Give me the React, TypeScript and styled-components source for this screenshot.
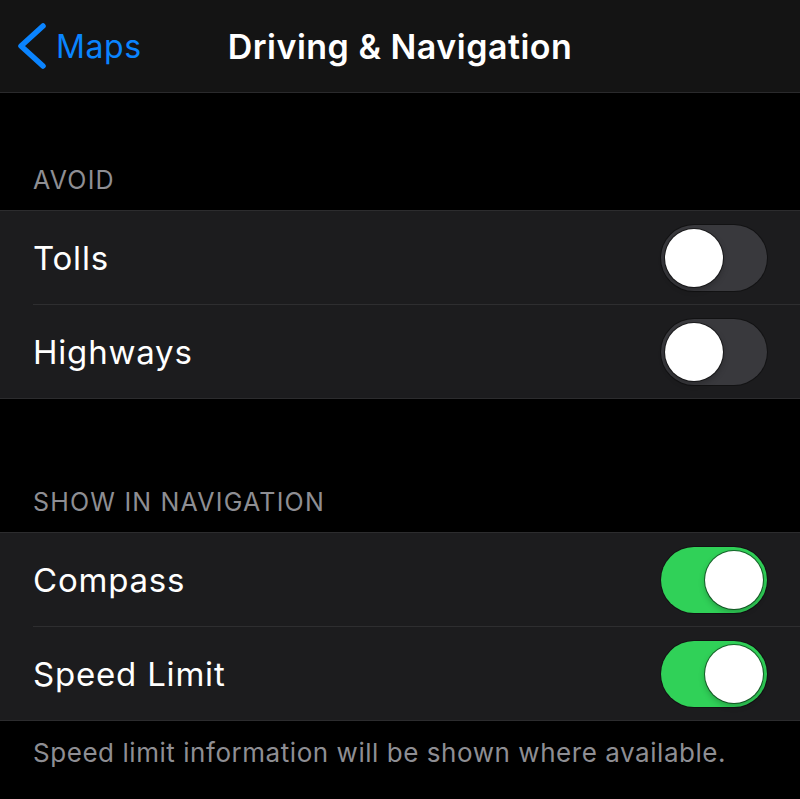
import React from 'react'
import styled, { createGlobalStyle } from 'styled-components'

const GlobalStyle = createGlobalStyle`
  html, body {
    margin: 0;
    padding: 0;
    background: #000000;
  }
  body {
    font-family: Inter, "Liberation Sans", Arial, sans-serif;
    -webkit-font-smoothing: antialiased;
  }
`

const Screen = styled.div`
  width: 800px;
  min-height: 799px;
  background: #000000;
  color: #ffffff;
`

const NavBar = styled.header`
  height: 92px;
  display: grid;
  grid-template-columns: 1fr auto 1fr;
  align-items: center;
  background: #141414;
  border-bottom: 1px solid #2a2a2c;
`

const BackButton = styled.button`
  justify-self: start;
  display: flex;
  align-items: center;
  gap: 9px;
  margin: 0;
  padding: 0 0 0 17px;
  border: none;
  background: transparent;
  color: #0a84ff;
  font-family: inherit;
  font-size: 32px;
  letter-spacing: 0.6px;
  cursor: pointer;
`

const Title = styled.h1`
  margin: 0;
  font-size: 34px;
  font-weight: 600;
  letter-spacing: 0.5px;
  color: #ffffff;
`

const Section = styled.section<{ $top: number }>`
  padding-top: ${({ $top }) => $top}px;
`

const SectionHeader = styled.div`
  padding: 0 33px;
  margin-bottom: 15px;
  font-size: 25px;
  line-height: 30px;
  letter-spacing: 1.2px;
  color: #8e8e93;
  text-transform: uppercase;
`

const Group = styled.div`
  background: #1c1c1e;
  border-top: 1px solid #2c2c2e;
  border-bottom: 1px solid #2c2c2e;
`

const Row = styled.div`
  height: 93px;
  display: flex;
  align-items: center;
  justify-content: space-between;
  margin-left: 33px;
  padding-right: 33px;
  & + & {
    border-top: 1px solid #2e2e30;
  }
`

const Label = styled.span`
  font-size: 33px;
  letter-spacing: 0.8px;
  color: #ffffff;
`

const Track = styled.button<{ $on: boolean }>`
  width: 106px;
  height: 66px;
  padding: 4px;
  margin: 0;
  border: none;
  border-radius: 33px;
  display: flex;
  align-items: center;
  justify-content: ${({ $on }) => ($on ? 'flex-end' : 'flex-start')};
  background: ${({ $on }) => ($on ? '#30d158' : '#39393d')};
  box-shadow: 0 0 0 1px rgba(0, 0, 0, 0.35);
  cursor: pointer;
`

const Knob = styled.span`
  width: 58px;
  height: 58px;
  border-radius: 50%;
  background: #ffffff;
  box-shadow: 0 0 0 1px rgba(0, 0, 0, 0.5), 0 3px 6px rgba(0, 0, 0, 0.25);
`

const Footer = styled.p`
  margin: 16px 0 0;
  padding: 0 33px;
  font-size: 26px;
  line-height: 32px;
  letter-spacing: 0.55px;
  color: #8e8e93;
`

const Chevron = () => (
  <svg width="30" height="48" viewBox="0 0 30 48" fill="none">
    <polyline
      points="26,4 4,24 26,44"
      stroke="#0a84ff"
      strokeWidth="5.5"
      strokeLinecap="round"
      strokeLinejoin="round"
    />
  </svg>
)

const Switch: React.FC<{ on: boolean }> = ({ on }) => (
  <Track $on={on} role="switch" aria-checked={on}>
    <Knob />
  </Track>
)

const avoid = [
  { label: 'Tolls', on: false },
  { label: 'Highways', on: false },
]

const showInNav = [
  { label: 'Compass', on: true },
  { label: 'Speed Limit', on: true },
]

export default function App() {
  return (
    <Screen>
      <GlobalStyle />
      <NavBar>
        <BackButton>
          <Chevron />
          Maps
        </BackButton>
        <Title>Driving &amp; Navigation</Title>
        <span />
      </NavBar>

      <Section $top={72}>
        <SectionHeader>Avoid</SectionHeader>
        <Group>
          {avoid.map((item) => (
            <Row key={item.label}>
              <Label>{item.label}</Label>
              <Switch on={item.on} />
            </Row>
          ))}
        </Group>
      </Section>

      <Section $top={88}>
        <SectionHeader>Show in Navigation</SectionHeader>
        <Group>
          {showInNav.map((item) => (
            <Row key={item.label}>
              <Label>{item.label}</Label>
              <Switch on={item.on} />
            </Row>
          ))}
        </Group>
        <Footer>Speed limit information will be shown where available.</Footer>
      </Section>
    </Screen>
  )
}
